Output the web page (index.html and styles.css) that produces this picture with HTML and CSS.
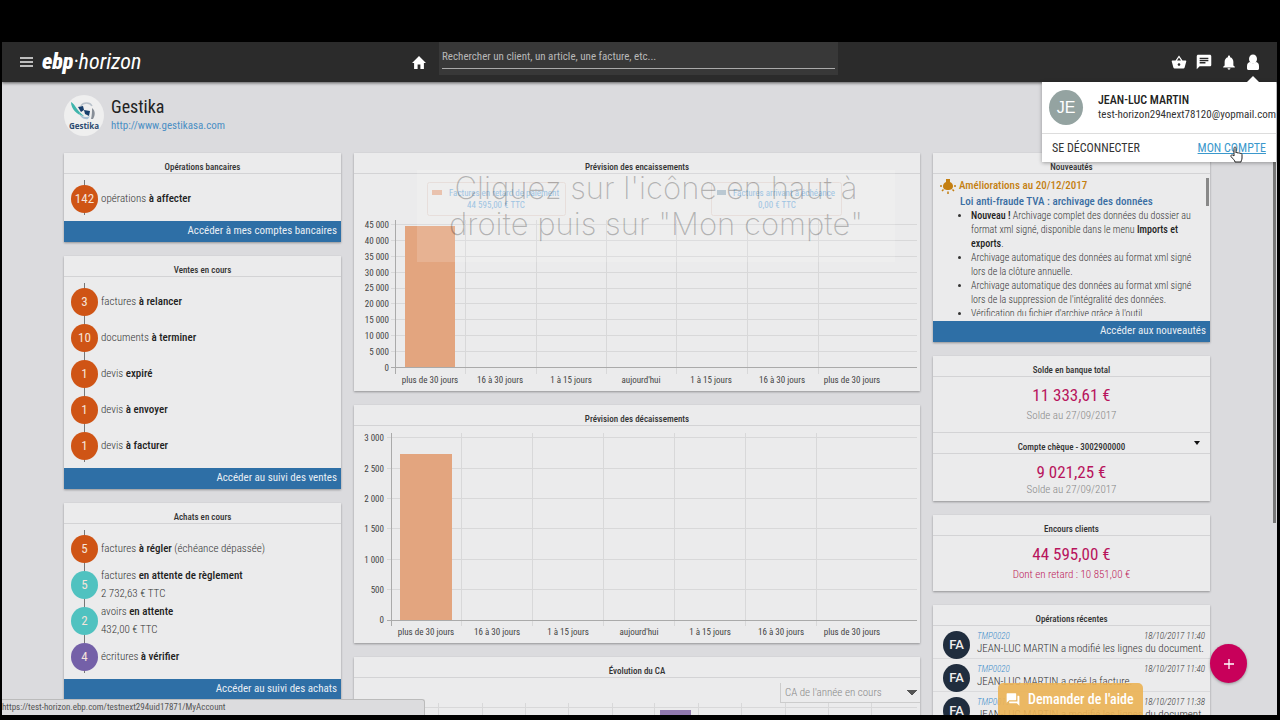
FILE: index.html
```html
<!DOCTYPE html>
<html lang="fr">
<head>
<meta charset="utf-8">
<title>EBP Horizon</title>
<link rel="stylesheet" href="styles.css">
</head>
<body>
<div class="app">
  <header class="topbar">
    <div class="brand">
      <button class="icon-btn" aria-label="Menu"><svg width="13" height="12" viewBox="0 0 13 12"><path d="M0 2h13M0 6h13M0 10h13" stroke="#eee" stroke-width="1.4"/></svg></button>
      <a class="logo" href="#"><b>ebp</b>·horizon</a>
    </div>
    <div class="finder">
      <button class="icon-btn" aria-label="Accueil"><svg width="14" height="13" viewBox="2 3 20 17" preserveAspectRatio="none"><path fill="#fff" d="M10 20v-6h4v6h5v-8h3L12 3 2 12h3v8z"/></svg></button>
      <div class="search"><input type="text" aria-label="Recherche" placeholder="Rechercher un client, un article, une facture, etc..."></div>
    </div>
    <nav class="tools">
      <button class="icon-btn" aria-label="Panier"><svg width="16" height="17" viewBox="0 1 24 22"><path fill="#fff" d="M17.21 9l-4.38-6.56c-.19-.28-.51-.42-.83-.42-.32 0-.64.14-.83.43L6.79 9H2c-.55 0-1 .45-1 1 0 .09.01.18.04.27l2.54 9.27c.23.84 1 1.46 1.92 1.46h13c.92 0 1.69-.62 1.93-1.46l2.54-9.27L23 10c0-.55-.45-1-1-1h-4.79zM9 9l3-4.4L15 9H9zm3 8c-1.1 0-2-.9-2-2s.9-2 2-2 2 .9 2 2-.9 2-2 2z"/></svg></button>
      <button class="icon-btn" aria-label="Messages"><svg width="16" height="16" viewBox="1 1 22 22"><path fill="#fff" d="M20 2H4c-1.1 0-1.99.9-1.99 2L2 22l4-4h14c1.1 0 2-.9 2-2V4c0-1.1-.9-2-2-2zM6 9h12v2H6V9zm8 5H6v-2h8v2zm4-6H6V6h12v2z"/></svg></button>
      <button class="icon-btn" aria-label="Notifications"><svg width="16" height="17" viewBox="1 1 22 22"><path fill="#fff" d="M12 22c1.1 0 2-.9 2-2h-4c0 1.1.89 2 2 2zm6-6v-5c0-3.07-1.64-5.64-4.5-6.32V4c0-.83-.67-1.5-1.5-1.5s-1.5.67-1.5 1.5v.68C7.63 5.36 6 7.92 6 11v5l-2 2v1h16v-1l-2-2z"/></svg></button>
      <button class="icon-btn" aria-label="Profil"><svg width="14" height="17" viewBox="0 0 14 17"><ellipse cx="7" cy="5" rx="4" ry="4.500" fill="#fff"/><path d="M1 12c0-3 2-4 3-4 2 1.700 4 1.700 6 0 1 0 3 1 3 4v2.500c0 1-1 1.500-2 1.500H3c-1 0-2-.5-2-1.500z" fill="#fff"/></svg></button>
    </nav>
  </header>

  <section class="company">
    <svg class="company-logo" width="40" height="41" viewBox="0 0 40 41" aria-hidden="true">
      <ellipse cx="20" cy="20.500" rx="20" ry="20.500" fill="#efefef"/>
      <path d="M7 7c4 2 6 9 13 14-7-1-13-7-13-14z" fill="#3fb5ac"/>
      <path d="M17 11c2-4 9-4 11 0" fill="none" stroke="#b9c2cb" stroke-width="1.500"/>
      <path d="M14 12l5-1 1 4-3 2zM20 15l6 1-1 5-4-2z" fill="#173e6c"/>
      <path d="M15 18c3 4 7 5 11 3l-2 3c-4 1-8-2-9-6z" fill="#a7c0d6"/>
      <path d="M28 13c4 3 3 8 1 11h-2c1-4 1-7 1-11z" fill="#888f98"/>
      <text x="20" y="34" text-anchor="middle" class="company-word">Gestika</text>
    </svg>
    <div>
      <h1 class="company-name">Gestika</h1>
      <a class="company-link" href="#">http://www.gestikasa.com</a>
    </div>
  </section>

  <main class="board">
    <div class="column">
      <section class="card">
        <h2 class="card-title">Opérations bancaires</h2>
        <ul class="tasks">
          <li class="task"><span class="count">142</span><span>opérations <b>à affecter</b></span></li>
        </ul>
        <a class="card-link" href="#">Accéder à mes comptes bancaires</a>
      </section>
      <section class="card">
        <h2 class="card-title">Ventes en cours</h2>
        <ul class="tasks">
          <li class="task"><span class="count">3</span><span>factures <b>à relancer</b></span></li>
          <li class="task"><span class="count">10</span><span>documents <b>à terminer</b></span></li>
          <li class="task"><span class="count">1</span><span>devis <b>expiré</b></span></li>
          <li class="task"><span class="count">1</span><span>devis <b>à envoyer</b></span></li>
          <li class="task"><span class="count">1</span><span>devis <b>à facturer</b></span></li>
        </ul>
        <a class="card-link" href="#">Accéder au suivi des ventes</a>
      </section>
      <section class="card">
        <h2 class="card-title">Achats en cours</h2>
        <ul class="tasks">
          <li class="task"><span class="count">5</span><span>factures <b>à régler</b> (échéance dépassée)</span></li>
          <li class="task"><span class="count teal">5</span><span>factures <b>en attente de règlement</b><br>2 732,63 € TTC</span></li>
          <li class="task"><span class="count teal">2</span><span>avoirs <b>en attente</b><br>432,00 € TTC</span></li>
          <li class="task"><span class="count violet">4</span><span>écritures <b>à vérifier</b></span></li>
        </ul>
        <a class="card-link" href="#">Accéder au suivi des achats</a>
      </section>
    </div>

    <div class="column">
      <section class="card">
        <h2 class="card-title">Prévision des encaissements</h2>
        <svg class="chart" viewBox="0 0 566 217">
          <path class="grid" d="M37 50.500H563M37 66.500H563M37 82.500H563M37 98.500H563M37 114.500H563M37 129.500H563M37 145.500H563M37 161.500H563M37 177.500H563M111.500 46V200M182.500 46V200M252.500 46V200M322.500 46V200M393.500 46V200M464.500 46V200"/>
          <rect x="51" y="52" width="50" height="141" fill="#e3a57f"/>
          <path class="axis" d="M41.500 46V200M37 193.500H563"/>
          <g class="ticks end">
            <text x="35" y="54">45 000</text><text x="35" y="70">40 000</text><text x="35" y="86">35 000</text><text x="35" y="102">30 000</text><text x="35" y="117">25 000</text><text x="35" y="133">20 000</text><text x="35" y="149">15 000</text><text x="35" y="165">10 000</text><text x="35" y="181">5 000</text><text x="35" y="197">0</text>
          </g>
          <g class="ticks mid">
            <text x="76" y="209">plus de 30 jours</text><text x="146" y="209">16 à 30 jours</text><text x="217" y="209">1 à 15 jours</text><text x="287" y="209">aujourd'hui</text><text x="357" y="209">1 à 15 jours</text><text x="428" y="209">16 à 30 jours</text><text x="498" y="209">plus de 30 jours</text>
          </g>
          <g class="legend">
            <rect x="73.500" y="8.500" width="138" height="33" rx="2"/><rect x="357.500" y="8.500" width="130" height="33" rx="2"/>
            <path d="M78 16h10v5H78z" fill="#e5b8a0"/><path d="M363 16h9v5h-9z" fill="#aebfca"/>
            <text x="150" y="22">Factures en retard de paiement</text><text x="142" y="34">44 595,00 € TTC</text>
            <text x="430" y="22">Factures arrivant à échéance</text><text x="423" y="34">0,00 € TTC</text>
          </g>
        </svg>
      </section>
      <section class="card">
        <h2 class="card-title">Prévision des décaissements</h2>
        <svg class="chart" viewBox="0 0 566 217">
          <path class="grid" d="M33 11.500H563M33 42.500H563M33 72.500H563M33 102.500H563M33 133.500H563M33 163.500H563M107.500 7V200M178.500 7V200M249.500 7V200M320.500 7V200M391.500 7V200M462.500 7V200"/>
          <rect x="46" y="28" width="52" height="166" fill="#e3a57f"/>
          <path class="axis" d="M37.500 7V200M33 194.500H563"/>
          <g class="ticks end">
            <text x="30" y="15">3 000</text><text x="30" y="46">2 500</text><text x="30" y="76">2 000</text><text x="30" y="106">1 500</text><text x="30" y="137">1 000</text><text x="30" y="167">500</text><text x="30" y="197">0</text>
          </g>
          <g class="ticks mid">
            <text x="72" y="209">plus de 30 jours</text><text x="143" y="209">16 à 30 jours</text><text x="214" y="209">1 à 15 jours</text><text x="285" y="209">aujourd'hui</text><text x="356" y="209">1 à 15 jours</text><text x="427" y="209">16 à 30 jours</text><text x="498" y="209">plus de 30 jours</text>
          </g>
        </svg>
      </section>
      <section class="card">
        <h2 class="card-title">Évolution du CA</h2>
        <div class="picker"><select aria-label="Période"><option>CA de l'année en cours</option></select></div>
        <svg class="chart" viewBox="0 0 566 80">
          <path class="grid" d="M37 4.500H563M84.500 0V80M128.500 0V80M171.500 0V80M214.500 0V80M258.500 0V80M300.500 0V80M344.500 0V80M387.500 0V80M431.500 0V80M474.500 0V80M517.500 0V80"/>
          <rect x="306" y="7" width="31" height="73" fill="#9078ae"/>
        </svg>
      </section>
    </div>

    <div class="column">
      <section class="card">
        <h2 class="card-title">Nouveautés</h2>
        <div class="news">
          <h3 class="news-date"><svg width="16" height="16" viewBox="0 0 16 16"><path d="M6 1h4v3c2 1 3 2.500 3 4 0 3-2 4-5 4s-5-1-5-4c0-1.500 1-3 3-4z" fill="#c47f11"/><path d="M0 8h2M14 8h2M2 13l1.500-1.500M14 13l-1.500-1.500M8 13.500V16" stroke="#c47f11" stroke-width="1.500"/></svg>Améliorations au 20/12/2017</h3>
          <h4 class="news-topic">Loi anti-fraude TVA : archivage des données</h4>
          <ul class="news-list">
            <li><b>Nouveau !</b> Archivage complet des données du dossier au format xml signé, disponible dans le menu <b>Imports et exports</b>.</li>
            <li>Archivage automatique des données au format xml signé lors de la clôture annuelle.</li>
            <li>Archivage automatique des données au format xml signé lors de la suppression de l'intégralité des données.</li>
            <li>Vérification du fichier d'archive grâce à l'outil</li>
          </ul>
          <span class="news-thumb"></span>
        </div>
        <a class="card-link" href="#">Accéder aux nouveautés</a>
      </section>
      <section class="card">
        <h2 class="card-title">Solde en banque total</h2>
        <div class="figure tall"><strong>11 333,61 €</strong><span>Solde au 27/09/2017</span></div>
        <button class="card-title account">Compte chèque - 3002900000<span class="caret"></span></button>
        <div class="figure"><strong>9 021,25 €</strong><span>Solde au 27/09/2017</span></div>
      </section>
      <section class="card">
        <h2 class="card-title">Encours clients</h2>
        <div class="figure tall"><strong>44 595,00 €</strong><span class="late">Dont en retard : 10 851,00 €</span></div>
      </section>
      <section class="card">
        <h2 class="card-title">Opérations récentes</h2>
        <ul class="feed">
          <li class="event"><span class="badge">FA</span><div class="event-body"><div class="event-meta"><a href="#">TMP0020</a><time>18/10/2017 11:40</time></div><p>JEAN-LUC MARTIN a modifié les lignes du document.</p></div></li>
          <li class="event"><span class="badge">FA</span><div class="event-body"><div class="event-meta"><a href="#">TMP0020</a><time>18/10/2017 11:40</time></div><p>JEAN-LUC MARTIN a créé la facture.</p></div></li>
          <li class="event"><span class="badge">FA</span><div class="event-body"><div class="event-meta"><a href="#">TMP0019</a><time>18/10/2017 11:38</time></div><p>JEAN-LUC MARTIN a modifié les lignes du document.</p></div></li>
        </ul>
      </section>
    </div>
  </main>

  <p class="caption">Cliquez sur l'icône en haut à droite puis sur "Mon compte"</p>

  <aside class="account-menu">
    <div class="who"><span class="avatar">JE</span><div><strong>JEAN-LUC MARTIN</strong><p>test-horizon294next78120@yopmail.com</p></div></div>
    <div class="actions"><a href="#">SE DÉCONNECTER</a><a class="current" href="#">MON COMPTE</a></div>
    <svg class="pointer" width="13" height="17" viewBox="0 0 13 17"><path d="M4 9V2.500C4 .5 6 .5 6 2.500V7c.5-1 2-.8 2 .3.500-1 2-.7 2 .4.600-.8 2-.4 2 .8V12c0 2-1 2.500-1 4H5c0-1.500-2-3-4-5.500C.500 9 2 8 4 10z" fill="#fff" stroke="#222" stroke-width="1"/></svg>
  </aside>

  <button class="add" aria-label="Ajouter"><svg width="12" height="12" viewBox="0 0 12 12"><path d="M6 1v10M1 6h10" stroke="#fff" stroke-width="1.300"/></svg></button>
  <button class="help"><svg width="14" height="15" viewBox="1 1 22 22"><path fill="#fff" d="M21 6h-2v9H6v2c0 .55.45 1 1 1h11l4 4V7c0-.55-.45-1-1-1zm-4 6V3c0-.55-.45-1-1-1H3c-.55 0-1 .45-1 1v14l4-4h10c.55 0 1-.45 1-1z"/></svg>Demander de l'aide</button>
  <div class="status">https://test-horizon.ebp.com/testnext294uid17871/MyAccount</div>
  <span class="page-thumb"></span>
</div>
</body>
</html>
```
FILE: styles.css
```css
* { box-sizing: border-box; }
body { margin: 0; background: #000; color: #333; font: 300 11px/14px "Roboto Condensed", "Liberation Sans Narrow", Roboto, sans-serif; }
h1, h2, h3, h4, p, ul { margin: 0; padding: 0; font-weight: inherit; font-size: inherit; }
ul { list-style: none; }
a { color: inherit; text-decoration: none; }
b { font-weight: 500; color: #222; }
button, input, select { font: inherit; color: inherit; border: 0; background: none; padding: 0; margin: 0; border-radius: 0; }

.app { position: relative; display: flex; flex-direction: column; height: calc(100vh - 47px); margin: 42px 3px 5px 2px; overflow: hidden; background: #dbdbde; }

.topbar { flex: none; display: grid; grid-template-columns: 410fr 426fr 439fr; height: 40px; background: #2b2b2b; box-shadow: 0 1px 3px #0009; z-index: 1; }
.icon-btn { display: flex; align-items: center; justify-content: center; }
.brand { display: flex; align-items: center; gap: 9px; padding-left: 18px; }
.logo { color: #fff; font: italic 400 22px/24px "Roboto Condensed", Roboto, sans-serif; }
.logo b { color: #fff; font-weight: 900; }
.finder { display: flex; align-items: center; gap: 13px; }
.search { flex: 1; align-self: flex-start; height: 33px; padding: 3px; background: #383838; }
.search input { display: block; width: 100%; height: 24px; border-bottom: 1px solid #aaa; outline: 0; font-weight: 400; }
.search input::placeholder { color: #b8b8b8; opacity: 1; }
.tools { display: flex; align-items: center; justify-content: flex-end; gap: 9px; padding-right: 17px; }

.company { flex: none; display: flex; gap: 7px; height: 71px; padding: 13px 62px 0; }
.company-word { font: 700 8px "Open Sans", sans-serif; fill: #2c4b70; }
.company-name { font-size: 18px; line-height: 24px; font-weight: 400; color: #222; }
.company-link { display: block; color: #4b8fc4; font-weight: 400; }

.board { display: grid; grid-template-columns: 277fr 566fr 277fr; gap: 13px; padding: 0 67px 0 62px; align-items: start; }
.column { display: flex; flex-direction: column; gap: 14px; min-width: 0; }
.card { background: #ebebec; box-shadow: 0 1px 2px #0005; }
.card-title { display: block; height: 21px; padding-top: 7px; border-bottom: 1px solid #d3d3d5; text-align: center; font-size: 9px; line-height: 14px; font-weight: 500; }
.card-link { display: block; height: 21px; padding-right: 4px; background: #2e6fa6; color: #e8eef4; text-align: right; line-height: 20px; font-weight: 400; }

.tasks { display: flex; flex-direction: column; gap: 8px; padding: 11px 7px 8px; background: linear-gradient(#777, #777) 20px 50% / 1px calc(100% - 12px) no-repeat; }
.task { display: flex; align-items: center; gap: 3px; height: 28px; line-height: 18px; }
.count { flex: none; width: 27px; height: 28px; border-radius: 50%; background: #cf5415; color: #f6e4da; text-align: center; font-size: 13px; line-height: 28px; font-weight: 400; }
.teal { background: #50c2c0; }
.violet { background: #7460a8; }

.chart { display: block; width: 100%; }
.grid { fill: none; stroke: #d8d8d9; }
.axis { fill: none; stroke: #aaa; }
.ticks { font-size: 9px; font-weight: 400; fill: #444; }
.end { text-anchor: end; }
.mid { text-anchor: middle; }
.legend { font-size: 9px; fill: #8ebadd; text-anchor: middle; font-weight: 400; }
.legend rect { fill: none; stroke: #e3d9d5; }
.picker { display: flex; justify-content: flex-end; padding-top: 5px; }
.picker select { width: 140px; height: 20px; padding: 0 4px; border-left: 1px solid #ccc; border-bottom: 1px solid #ccc; appearance: none; color: #888; background: linear-gradient(to bottom left, #555 50%, #0000 50%) 126px 7px / 5px 6px no-repeat, linear-gradient(to bottom right, #555 50%, #0000 50%) 131px 7px / 5px 6px no-repeat; }

.news { position: relative; height: 147px; padding: 4px 6px 0 7px; overflow: hidden; }
.news::after { content: ""; position: absolute; left: 0; right: 0; bottom: 0; height: 5px; background: #ebebec; }
.news-date { display: flex; align-items: center; gap: 3px; height: 16px; color: #c47f11; font-weight: 500; }
.news-topic { padding-left: 20px; line-height: 15px; color: #3a6ea3; font-weight: 500; }
.news-list { padding-left: 31px; list-style: disc; font-size: 10px; }
.news-thumb { position: absolute; top: 4px; right: 1px; width: 3px; height: 28px; background: #888; }

.figure { display: flex; flex-direction: column; align-items: center; height: 47px; padding-top: 9px; line-height: 18px; }
.figure strong { color: #b8145c; font-size: 17px; font-weight: 400; }
.figure span { color: #888; }
.figure .late { color: #bd2159; }
.tall { height: 55px; gap: 3px; }
.account { position: relative; width: 100%; height: 22px; border-top: 1px solid #d3d3d5; font-weight: 500; }
.caret { position: absolute; right: 10px; top: 8px; border: 3px solid #0000; border-top: 4px solid #111; border-bottom: 0; }

.event { display: flex; gap: 7px; height: 33px; padding: 5px 5px 0 10px; border-bottom: 1px solid #dadadc; }
.badge { flex: none; width: 27px; height: 28px; border-radius: 50%; background: #202d3e; color: #eee; font: 500 13px/28px Roboto, sans-serif; text-align: center; }
.event-body { flex: 1; min-width: 0; white-space: nowrap; line-height: 13px; }
.event-meta { display: flex; justify-content: space-between; font-style: italic; font-size: 9px; line-height: 11px; }
.event-meta a { color: #3e8ecb; }

.caption { position: absolute; left: 415px; top: 128px; width: 478px; height: 92px; padding: 0 30px; color: #00000040; background: #ffffff26; text-align: center; font: 200 31px/36px Inter, Roboto, sans-serif; z-index: 2; }

.account-menu { position: absolute; top: 40px; right: 1px; width: 234px; background: #fff; box-shadow: 0 1px 4px #0005; font-weight: 400; z-index: 3; }
.account-menu::before { content: ""; position: absolute; top: -6px; right: 17px; border: 6px solid #0000; border-top: 0; border-bottom-color: #fff; }
.who { display: flex; align-items: center; gap: 15px; height: 51px; padding-left: 7px; white-space: nowrap; }
.who strong { font-size: 12px; font-weight: 500; color: #222; }
.avatar { flex: none; width: 34px; height: 35px; border-radius: 50%; background: #94a3a1; color: #fff; font: 400 16px/35px "Liberation Sans", sans-serif; text-align: center; }
.actions { display: flex; justify-content: space-between; align-items: center; height: 29px; padding: 0 10px; border-top: 1px solid #ddd; font-size: 12px; }
.current { color: #3b98cc; text-decoration: underline; }
.pointer { position: absolute; right: 33px; bottom: -1px; }

.add { position: absolute; right: 30px; bottom: 32px; width: 37px; height: 39px; border-radius: 50%; background: #c8005a; display: flex; align-items: center; justify-content: center; box-shadow: 0 1px 3px #0005; }
.help { position: absolute; right: 134px; bottom: 0; display: flex; align-items: center; gap: 8px; width: 145px; height: 32px; padding-left: 8px; border-radius: 5px 5px 0 0; background: #ebb354e6; color: #fff; font-size: 14px; font-weight: 500; }
.status { position: absolute; left: 0; bottom: 0; width: 423px; height: 16px; border: solid #bbb; border-width: 1px 1px 0 0; border-radius: 0 3px 0 0; background: #dcdcde; color: #555; font: 400 9px/15px "Roboto Condensed", sans-serif; }
.page-thumb { position: absolute; right: 1px; top: 40px; width: 3px; height: 441px; background: #777; }
```
